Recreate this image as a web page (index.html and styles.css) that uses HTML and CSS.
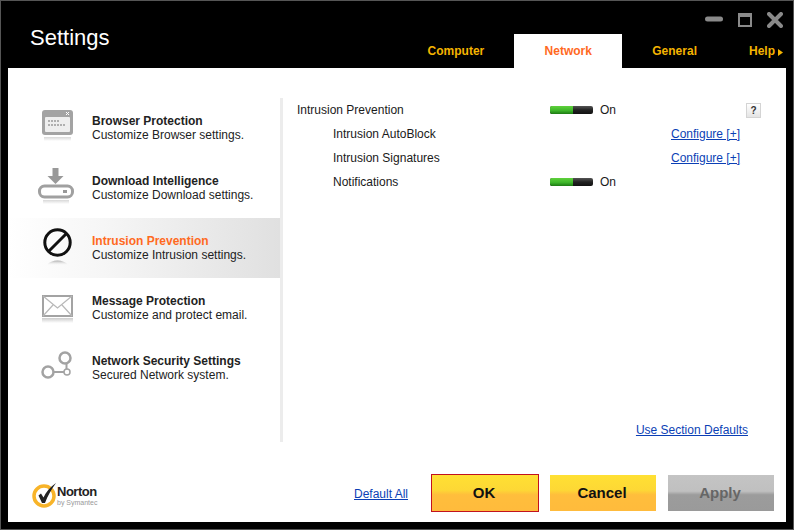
FILE: index.html
```html
<!DOCTYPE html>
<html lang="en">
<head>
<meta charset="utf-8">
<title>Settings</title>
<link rel="stylesheet" href="styles.css">
</head>
<body>
<div class="window">
  <header class="header">
    <h1 class="title">Settings</h1>
    <div class="header-right">
      <div class="controls">
        <svg class="ctl" width="18" height="6" viewBox="0 0 18 6"><rect x="0" y="0.500" width="18" height="5" rx="2.500" fill="#8a8a8a"/></svg>
        <svg class="ctl ctl-max" width="14" height="14" viewBox="0 0 14 14"><rect x="1" y="1" width="12" height="12" fill="none" stroke="#8a8a8a" stroke-width="2"/><rect x="1" y="1" width="12" height="3" fill="#8a8a8a"/></svg>
        <svg class="ctl ctl-close" width="16" height="16" viewBox="0 0 16 16"><path d="M2 2L14 14M14 2L2 14" stroke="#8a8a8a" stroke-width="4" stroke-linecap="round"/></svg>
      </div>
      <nav class="tabs">
        <a class="tab tab-computer">Computer</a>
        <a class="tab tab-active">Network</a>
        <a class="tab tab-general">General</a>
        <a class="tab tab-help">Help<svg class="help-arrow" width="5" height="7" viewBox="0 0 5 7"><path d="M0 0L5 3.500L0 7Z" fill="#f5b400"/></svg></a>
      </nav>
    </div>
  </header>
  <div class="panel">
    <div class="main">
      <aside class="sidebar">
        <div class="item">
          <div class="icon">
            <svg width="40" height="40" viewBox="0 0 40 40">
              <defs><linearGradient id="f1" x1="0" y1="0" x2="0" y2="1"><stop offset="0" stop-color="#d8d8d8"/><stop offset="1" stop-color="#fff"/></linearGradient></defs>
              <rect x="2" y="4" width="31" height="25" rx="3" fill="#a3a3a3"/>
              <rect x="5" y="11" width="25" height="15" rx="1" fill="#eeeeee"/>
              <path d="M26 6l3 3M29 6l-3 3" stroke="#fff" stroke-width="1"/>
              <path d="M8 15h11M8 19h18" stroke="#9a9a9a" stroke-width="1.600" stroke-dasharray="2 1"/>
              <rect x="4" y="31" width="27" height="4" fill="url(#f1)"/>
            </svg>
          </div>
          <div class="text"><div class="name">Browser Protection</div><div class="desc">Customize Browser settings.</div></div>
        </div>
        <div class="item">
          <div class="icon">
            <svg width="40" height="40" viewBox="0 0 40 40">
              <defs><linearGradient id="f2" x1="0" y1="0" x2="0" y2="1"><stop offset="0" stop-color="#d8d8d8"/><stop offset="1" stop-color="#fff"/></linearGradient></defs>
              <path d="M12.500 2h6v8h5l-8 8l-8-8h5z" fill="#999"/>
              <rect x="-0.500" y="20" width="33" height="11" rx="5" fill="#fff" stroke="#a0a0a0" stroke-width="3"/>
              <rect x="23" y="24" width="4" height="3" fill="#999"/>
              <rect x="3" y="34" width="26" height="4" fill="url(#f2)"/>
            </svg>
          </div>
          <div class="text"><div class="name">Download Intelligence</div><div class="desc">Customize Download settings.</div></div>
        </div>
        <div class="item item-active">
          <div class="icon">
            <svg width="40" height="40" viewBox="0 0 40 40">
              <defs><linearGradient id="f3" x1="0" y1="0" x2="0" y2="1"><stop offset="0" stop-color="#aaa"/><stop offset="1" stop-color="#eee" stop-opacity="0"/></linearGradient></defs>
              <circle cx="17.500" cy="16.500" r="12.700" fill="none" stroke="#111" stroke-width="3"/>
              <path d="M8.500 25.500L26.500 7.500" stroke="#111" stroke-width="3"/>
              <path d="M7 39c4-6 17-6 21 0z" fill="url(#f3)"/>
            </svg>
          </div>
          <div class="text"><div class="name name-active">Intrusion Prevention</div><div class="desc">Customize Intrusion settings.</div></div>
        </div>
        <div class="item">
          <div class="icon">
            <svg width="40" height="40" viewBox="0 0 40 40">
              <defs><linearGradient id="f4" x1="0" y1="0" x2="0" y2="1"><stop offset="0" stop-color="#ccc"/><stop offset="1" stop-color="#fff"/></linearGradient></defs>
              <rect x="3" y="10" width="29" height="20" fill="#fff" stroke="#a3a3a3" stroke-width="2"/>
              <path d="M3 10L17.500 22L32 10M3 30L13 19M32 30L22 19" fill="none" stroke="#b8b8b8" stroke-width="1.200"/>
              <rect x="2" y="32" width="31" height="5" fill="url(#f4)"/>
            </svg>
          </div>
          <div class="text"><div class="name">Message Protection</div><div class="desc">Customize and protect email.</div></div>
        </div>
        <div class="item">
          <div class="icon">
            <svg width="40" height="40" viewBox="0 0 40 40">
              <g fill="none" stroke="#a3a3a3">
                <circle cx="25" cy="12" r="5.500" stroke-width="2.500"/>
                <circle cx="8" cy="26" r="5.500" stroke-width="2.500"/>
                <circle cx="27" cy="26" r="3" stroke-width="1.500"/>
                <path d="M14 26H24M26.500 18V23" stroke-width="2"/>
              </g>
            </svg>
          </div>
          <div class="text"><div class="name">Network Security Settings</div><div class="desc">Secured Network system.</div></div>
        </div>
      </aside>
      <section class="content">
        <div class="rows">
          <div class="row">
            <span class="label">Intrusion Prevention</span>
            <span class="state"><span class="toggle"><span class="toggle-on"></span></span>On</span>
            <span></span>
            <span class="help-btn">?</span>
          </div>
          <div class="row">
            <span class="label label-sub">Intrusion AutoBlock</span>
            <span></span>
            <a class="link" href="#">Configure [+]</a>
            <span></span>
          </div>
          <div class="row">
            <span class="label label-sub">Intrusion Signatures</span>
            <span></span>
            <a class="link" href="#">Configure [+]</a>
            <span></span>
          </div>
          <div class="row">
            <span class="label label-sub">Notifications</span>
            <span class="state"><span class="toggle"><span class="toggle-on"></span></span>On</span>
            <span></span>
            <span></span>
          </div>
        </div>
        <a class="link link-defaults" href="#">Use Section Defaults</a>
      </section>
    </div>
    <footer class="footer">
      <div class="logo">
        <svg width="26" height="26" viewBox="0 0 26 26">
          <circle cx="12" cy="14" r="10" fill="none" stroke="#f8b429" stroke-width="3.500"/>
          <path d="M6.500 13.500L9 11.500L11.500 15.500C14 10 18 5 24 1C19.500 7 15.500 14 13 21H10Z" fill="#222"/>
        </svg>
        <div class="logo-text"><span class="logo-name">Norton</span><span class="logo-by">by Symantec</span></div>
      </div>
      <a class="link link-all" href="#">Default All</a>
      <button class="btn btn-ok">OK</button>
      <button class="btn btn-cancel">Cancel</button>
      <button class="btn btn-apply">Apply</button>
    </footer>
  </div>
</div>
</body>
</html>
```
FILE: styles.css
```css
* { box-sizing: border-box; }
html, body { margin: 0; padding: 0; }
body {
  width: 794px;
  height: 530px;
  overflow: hidden;
  font-family: "Liberation Sans", Arial, sans-serif;
  font-size: 12px;
  color: #1a1a1a;
}
.window {
  width: 794px;
  height: 530px;
  background: #000;
  border: 1px solid #555;
  padding: 0 7px 7px;
  display: flex;
  flex-direction: column;
}
.header {
  height: 67px;
  flex: none;
  display: flex;
  justify-content: space-between;
}
.title {
  margin: 23px 0 0 22px;
  font-size: 22px;
  line-height: 28px;
  font-weight: normal;
  color: #fff;
}
.header-right {
  display: flex;
  flex-direction: column;
  align-items: flex-end;
}
.controls {
  height: 33px;
  display: flex;
  align-items: flex-start;
  padding-top: 11px;
  margin-right: 3px;
}
.ctl { display: block; margin-top: 4px; }
.ctl-max { margin: 1px 0 0 15px; }
.ctl-close { margin: 0 0 0 15px; }
.tabs {
  display: flex;
  height: 34px;
  margin-right: 3px;
}
.tab {
  font-weight: bold;
  font-size: 12px;
  line-height: 34px;
  color: #f5b400;
}
.tab-computer { padding-right: 30px; }
.tab-active {
  width: 108px;
  text-align: center;
  background: #fff;
  color: #ff6a1f;
}
.tab-general { padding-left: 30px; }
.tab-help { margin-left: 52px; white-space: nowrap; }
.help-arrow { margin-left: 3px; vertical-align: -1px; }
.panel {
  flex: 1;
  background: #fff;
  display: flex;
  flex-direction: column;
}
.main {
  flex: none;
  height: 344px;
  margin-top: 30px;
  display: flex;
}
.sidebar {
  width: 275px;
  flex: none;
  border-right: 3px solid #ececec;
}
.item {
  height: 60px;
  display: flex;
  align-items: flex-start;
  padding: 8px 0 0 32px;
}
.item-active {
  background: linear-gradient(90deg, #fff 0%, #f6f6f6 35%, #e0e0e0 100%);
}
.icon { width: 52px; flex: none; height: 40px; }
.icon svg { display: block; overflow: visible; }
.text { padding-top: 8px; line-height: 14px; }
.name { font-weight: bold; color: #222; }
.name-active { color: #ff6a1f; }
.desc { color: #222; }
.content {
  flex: 1;
  padding-left: 14px;
  display: flex;
  flex-direction: column;
}
.rows { flex: 1; }
.row {
  display: grid;
  grid-template-columns: 253px 121px 75px 15px;
  height: 24px;
  align-items: center;
  line-height: 24px;
}
.label-sub { padding-left: 36px; }
.state { display: flex; align-items: center; white-space: nowrap; }
.toggle {
  width: 43px;
  height: 8px;
  margin-right: 7px;
  border-radius: 2px;
  background: linear-gradient(#555, #222 50%, #111);
  display: block;
  overflow: hidden;
}
.toggle-on {
  display: block;
  width: 23px;
  height: 8px;
  background: linear-gradient(#5fd13c, #3fb62a 55%, #1c7a12);
}
.help-btn {
  width: 15px;
  height: 15px;
  border: 1px solid #d4d4d4;
  background: linear-gradient(#fff, #e4e4e4);
  font-size: 10px;
  font-weight: bold;
  line-height: 13px;
  text-align: center;
  color: #333;
}
.link { color: #0b3fb5; text-decoration: underline; }
.link-defaults {
  align-self: flex-end;
  margin-right: 38px;
  margin-bottom: 5px;
  line-height: 14px;
}
.footer {
  flex: 1;
  display: flex;
  align-items: center;
  padding: 22px 12px 0 24px;
}
.logo {
  display: flex;
  align-items: flex-start;
  width: 322px;
  flex: none;
  color: #222;
  margin-top: 4px;
}
.logo-text { display: flex; flex-direction: column; margin-left: -1px; padding-top: 3px; }
.logo-name { font-size: 13px; font-weight: bold; line-height: 13px; letter-spacing: -0.5px; }
.logo-by { font-size: 7px; line-height: 10px; color: #999; }
.link-all { width: 77px; flex: none; margin-top: 1px; }
.btn {
  height: 36px;
  width: 106px;
  flex: none;
  border: 0;
  padding: 0 2px 2px 0;
  font-family: inherit;
  font-weight: bold;
  font-size: 15px;
  color: #111;
  background: linear-gradient(#ffe033 0%, #fdd835 42%, #ffbe3c 55%, #ffbb3c 100%);
}
.btn-ok {
  width: 108px;
  height: 38px;
  border: 1px solid #c1121f;
}
.btn-cancel { margin-left: 11px; }
.btn-apply {
  margin-left: 12px;
  color: #666;
  background: linear-gradient(#c4c4c4 0%, #c0c0c0 45%, #9c9c9c 55%, #9a9a9a 100%);
}
```
